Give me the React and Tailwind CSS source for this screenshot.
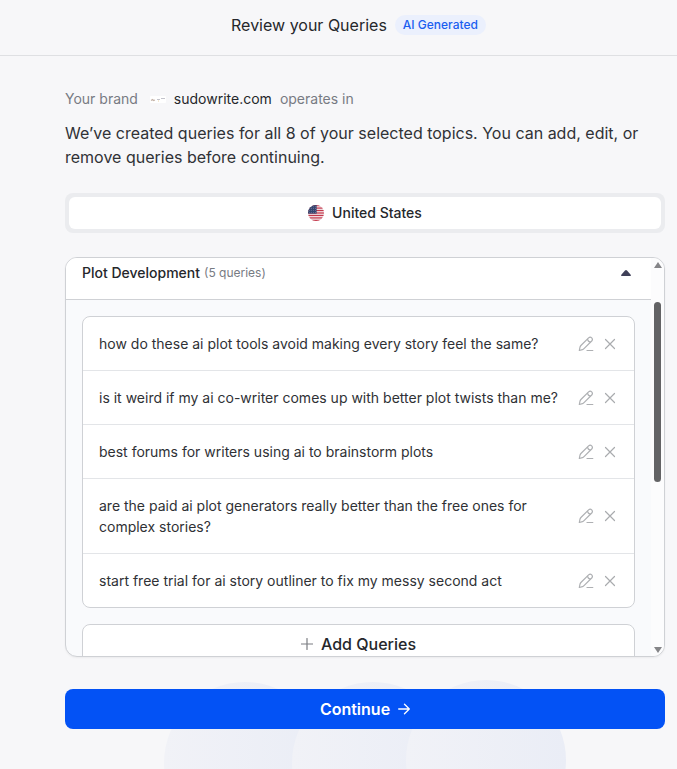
import React from "react";

const QUERIES = [
  "how do these ai plot tools avoid making every story feel the same?",
  "is it weird if my ai co-writer comes up with better plot twists than me?",
  "best forums for writers using ai to brainstorm plots",
  "are the paid ai plot generators really better than the free ones for complex stories?",
  "start free trial for ai story outliner to fix my messy second act",
];

const STRIPES = [0, 1, 2, 3, 4, 5, 6];

function Flag() {
  return (
    <svg viewBox="0 0 26 26" className="size-4" aria-hidden="true">
      <clipPath id="flag-round">
        <circle cx="13" cy="13" r="13" />
      </clipPath>
      <g clipPath="url(#flag-round)">
        <rect width="26" height="26" fill="#f3e6ea" />
        {STRIPES.map((i) => (
          <rect key={i} y={i * 4} width="26" height="2" fill="#c4384b" />
        ))}
        <rect width="14" height="14" fill="#34446f" />
        {[2, 5, 8, 11].map((y) =>
          [3, 6, 9, 12].map((x) => (
            <circle key={`${x}-${y}`} cx={x} cy={y + 1} r="0.6" fill="#b4bdd4" />
          ))
        )}
      </g>
    </svg>
  );
}

function BrandMark() {
  return (
    <svg viewBox="0 0 16 16" className="size-4" aria-hidden="true">
      <rect y="5" width="16" height="7" rx="1" fill="#ffffff" />
      <path d="M1 9.500l1.500-1 1 1 1.500-.5" fill="none" stroke="#c4b3a8" strokeWidth="1.200" />
      <path d="M7 8.500h3M11 7.500h4" stroke="#c3c3cb" strokeWidth="1" />
      <path d="M8 10h1" stroke="#e9d2a8" strokeWidth="1" />
    </svg>
  );
}

function PenIcon() {
  return (
    <svg viewBox="0 0 16 16" className="size-4" fill="none" stroke="#aeb0b3" strokeWidth="1.2" strokeLinecap="round" strokeLinejoin="round" aria-hidden="true">
      <path d="M1.300 14.500L2 11.200Q2.200 10.300 2.900 9.500L10.600 1.900Q12.200 .5 13.700 1.900Q15.100 3.400 13.700 5L6 12.700Q5.300 13.400 4.400 13.700Z" />
      <path d="M9.600 3.300Q10 5.800 12.500 6" />
      <path d="M9 14.500h5.800" />
    </svg>
  );
}

function CloseIcon() {
  return (
    <svg viewBox="0 0 16 16" className="size-4" fill="none" stroke="#a9abae" strokeWidth="1.2" strokeLinecap="round" aria-hidden="true">
      <path d="M3.500 3.500l9 9M12.500 3.500l-9 9" />
    </svg>
  );
}

function QueryRow({ text }) {
  return (
    <li className="flex items-center gap-4 border-b border-[#e3e5e8] p-4 last:border-b-0">
      <span className="min-w-0 flex-1 text-sm leading-[21px] text-[#2f3135]">{text}</span>
      <span className="flex gap-2">
        <button type="button" aria-label="Edit query"><PenIcon /></button>
        <button type="button" aria-label="Remove query"><CloseIcon /></button>
      </span>
    </li>
  );
}

function ScrollTrack() {
  return (
    <div className="flex w-[13px] shrink-0 flex-col items-center bg-[#fcfcfd] pt-1 pb-[3px]" aria-hidden="true">
      <svg viewBox="0 0 8 6" className="h-1.5 w-2"><path d="M4 0l4 6H0z" fill="#858588" /></svg>
      <div className="mt-[34px] h-[180px] w-[7px] rounded-full bg-[#636365]" />
      <svg viewBox="0 0 8 6" className="mt-auto h-1.5 w-2"><path d="M0 0h8L4 6z" fill="#858588" /></svg>
    </div>
  );
}

export default function App() {
  return (
    <div className="relative isolate min-h-screen overflow-hidden bg-[#f7f7f9] font-['Inter',sans-serif] text-[#25272b]">
      <svg viewBox="0 0 402 90" className="absolute bottom-0 left-[164px] -z-10 w-[402px]" aria-hidden="true">
        <defs>
          <linearGradient id="bubble" x1="0" x2="1">
            <stop offset="0" stopColor="#f1f2f7" />
            <stop offset="1" stopColor="#eaedf6" />
          </linearGradient>
        </defs>
        <circle cx="81" cy="84" r="81" fill="url(#bubble)" />
        <circle cx="209" cy="84" r="81" fill="url(#bubble)" />
        <circle cx="322" cy="81" r="80" fill="url(#bubble)" />
      </svg>

      <header className="flex h-14 items-center justify-center gap-2 border-b border-[#dfe0e3] pb-1.5 pl-10">
        <h1 className="text-base">Review your Queries</h1>
        <span className="rounded-full bg-[#ebf0fd] px-2 py-0.5 text-xs font-medium text-[#1b5ff0]">AI Generated</span>
      </header>

      <main className="pt-[31px] pr-3 pb-10 pl-[65px]">
        <div className="flex h-6 items-center text-sm text-[#777b83]">
          <span>Your brand</span>
          <span className="mx-2 flex items-center gap-2 pl-1 text-[#25272b]">
            <BrandMark />
            sudowrite.com
          </span>
          <span>operates in</span>
        </div>
        <p className="mt-2.5 text-base leading-6 text-[#303236]">
          We’ve created queries for all 8 of your selected topics. You can add, edit, or remove queries before continuing.
        </p>

        <div className="mt-6 rounded-lg bg-[#ebecef] p-1">
          <button type="button" className="flex h-8 w-full items-center justify-center gap-2 rounded-md bg-white text-sm font-medium">
            <Flag />
            United States
          </button>
        </div>

        <section className="mt-6 flex h-[400px] overflow-hidden rounded-xl border border-[#cfd1d5] bg-[#f9fafc] shadow-xs">
          <div className="min-w-0 flex-1">
            <button type="button" className="flex w-full items-center justify-between border-b border-[#cfd1d5] bg-white pt-[5px] pr-5 pb-4 pl-4 text-left">
              <span className="flex items-center gap-1 text-sm font-medium">
                Plot Development
                <span className="text-xs leading-5 font-normal text-[#777b83]">(5 queries)</span>
              </span>
              <svg viewBox="0 0 10 6" className="h-1.5 w-2.5" aria-hidden="true">
                <path d="M5 0Q5.500 0 6 .5L9.700 4.700Q10.300 6 9 6H1Q-.3 6 .3 4.700L4 .5Q4.500 0 5 0z" fill="#3f4058" />
              </svg>
            </button>
            <div className="flex flex-col gap-4 p-4">
              <ul className="rounded-lg border border-[#cfd1d5] bg-white">
                {QUERIES.map((text) => <QueryRow key={text} text={text} />)}
              </ul>
              <button type="button" className="flex h-10 items-center justify-center gap-2 rounded-lg border border-[#cfd1d5] bg-white text-base font-medium">
                <svg viewBox="0 0 12 12" className="size-3" aria-hidden="true">
                  <path d="M6 .5v11M.5 6h11" stroke="#7b7d82" strokeWidth="1.2" strokeLinecap="round" />
                </svg>
                Add Queries
              </button>
            </div>
          </div>
          <ScrollTrack />
        </section>

        <button type="button" className="mt-8 flex h-10 w-full items-center justify-center gap-2 rounded-lg bg-[#0352f5] text-base font-semibold text-white">
          Continue
          <svg viewBox="0 0 12 12" className="size-3" fill="none" stroke="currentColor" strokeWidth="1.3" strokeLinecap="round" strokeLinejoin="round" aria-hidden="true">
            <path d="M.7 6h10.600M6.500 1.200L11.300 6l-4.800 4.800" />
          </svg>
        </button>
      </main>
    </div>
  );
}
